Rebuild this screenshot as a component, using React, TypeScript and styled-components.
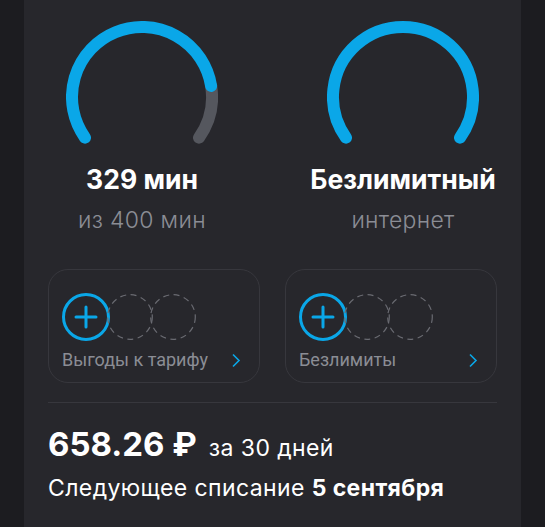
import styled, { createGlobalStyle } from "styled-components"

const Global = createGlobalStyle`
    body {
        margin: 0;
        background: #1c1c20;
        font-family: "Inter", "Roboto", sans-serif;
    }
`

const Page = styled.div`
    padding: 0 24px;
    height: 527px;
    overflow: hidden;
`

const Card = styled.div`
    background: #27272c;
    height: 100%;
    padding: 21px 24px 0;
    box-sizing: border-box;
    color: #ffffff;
`

const Gauges = styled.div`
    display: flex;
    justify-content: space-between;
`

const GaugeCol = styled.div`
    width: 188px;
    display: flex;
    flex-direction: column;
    align-items: center;
`

const Value = styled.div`
    margin-top: 18px;
    font-size: 26.5px;
    font-weight: 700;
    line-height: 32px;
    white-space: nowrap;
`

const Caption = styled.div`
    margin-top: 11px;
    font-size: 23px;
    font-weight: 300;
    line-height: 28px;
    letter-spacing: 0.3px;
    color: #8b8d95;
`

const Boxes = styled.div`
    display: grid;
    grid-template-columns: 1fr 1fr;
    gap: 25px;
    margin-top: 35px;
`

const Box = styled.div`
    height: 114px;
    box-sizing: border-box;
    border: 1px solid #37373d;
    border-radius: 20px;
    padding: 23px 18px 0 13px;
`

const Circles = styled.div`
    display: flex;
    align-items: center;
`

const AddCircle = styled.div`
    width: 48px;
    height: 48px;
    box-sizing: border-box;
    border: 3px solid #0aa7e8;
    border-radius: 50%;
    display: flex;
    align-items: center;
    justify-content: center;
`

const Slot = styled.svg`
    display: block;
    margin-left: -3px;
`

const BoxFooter = styled.div`
    display: flex;
    justify-content: space-between;
    align-items: center;
    margin-top: 8px;
    font-family: "Roboto", sans-serif;
    font-size: 18px;
    line-height: 22px;
    color: #8b8d95;
`

const Divider = styled.div`
    height: 1px;
    background: #37373d;
    margin-top: 19px;
`

const PriceRow = styled.div`
    display: flex;
    align-items: baseline;
    margin-top: 21px;
`

const Price = styled.span`
    font-size: 33px;
    font-weight: 700;
    line-height: 40px;
`

const Period = styled.span`
    font-size: 23px;
    letter-spacing: 0.4px;
    margin-left: 12px;
`

const NextCharge = styled.div`
    margin-top: 10px;
    font-size: 23px;
    line-height: 28px;
    letter-spacing: 0.4px;

    b {
        font-weight: 700;
    }
`

const R = 70
const CX = 76
const CY = 76
const START = -125.5
const SWEEP = 251

const point = (deg: number) => {
    const a = (deg * Math.PI) / 180
    return [CX + R * Math.sin(a), CY - R * Math.cos(a)]
}

const arc = (from: number, to: number) => {
    const [x1, y1] = point(from)
    const [x2, y2] = point(to)
    const large = to - from > 180 ? 1 : 0
    return `M ${x1} ${y1} A ${R} ${R} 0 ${large} 1 ${x2} ${y2}`
}

const Gauge = ({ value, max }: { value: number; max: number }) => {
    const end = START + SWEEP * Math.min(value / max, 1)
    return (
        <svg width="152" height="124" viewBox="0 0 152 124">
            {value < max && (
                <path d={arc(end, START + SWEEP)} stroke="#55575e" strokeWidth="12" fill="none" strokeLinecap="round" />
            )}
            <path d={arc(START, end)} stroke="#0aa7e8" strokeWidth="12" fill="none" strokeLinecap="round" />
        </svg>
    )
}

const Chevron = () => (
    <svg width="10" height="15" viewBox="0 0 10 15">
        <path d="M2 1.5 L8 7.5 L2 13.5" stroke="#0aa7e8" strokeWidth="1.6" fill="none" />
    </svg>
)

const Plus = () => (
    <svg width="24" height="24" viewBox="0 0 24 24">
        <path d="M12 2 V22 M2 12 H22" stroke="#0aa7e8" strokeWidth="3" strokeLinecap="round" />
    </svg>
)

const EmptySlot = () => (
    <Slot width="46" height="46" viewBox="0 0 46 46">
        <circle cx="23" cy="23" r="22.3" stroke="#6a6b72" strokeWidth="1.2" strokeDasharray="6 4.5" fill="none" />
    </Slot>
)

const ServiceBox = ({ label }: { label: string }) => (
    <Box>
        <Circles>
            <AddCircle><Plus /></AddCircle>
            <EmptySlot />
            <EmptySlot />
        </Circles>
        <BoxFooter>
            <span>{label}</span>
            <Chevron />
        </BoxFooter>
    </Box>
)

export default () => <>
    <Global />
    <Page>
        <Card>
            <Gauges>
                <GaugeCol>
                    <Gauge value={329} max={400} />
                    <Value>329 мин</Value>
                    <Caption>из 400 мин</Caption>
                </GaugeCol>
                <GaugeCol>
                    <Gauge value={1} max={1} />
                    <Value>Безлимитный</Value>
                    <Caption>интернет</Caption>
                </GaugeCol>
            </Gauges>
            <Boxes>
                <ServiceBox label="Выгоды к тарифу" />
                <ServiceBox label="Безлимиты" />
            </Boxes>
            <Divider />
            <PriceRow>
                <Price>658.26 ₽</Price>
                <Period>за 30 дней</Period>
            </PriceRow>
            <NextCharge>Следующее списание <b>5 сентября</b></NextCharge>
        </Card>
    </Page>
</>
